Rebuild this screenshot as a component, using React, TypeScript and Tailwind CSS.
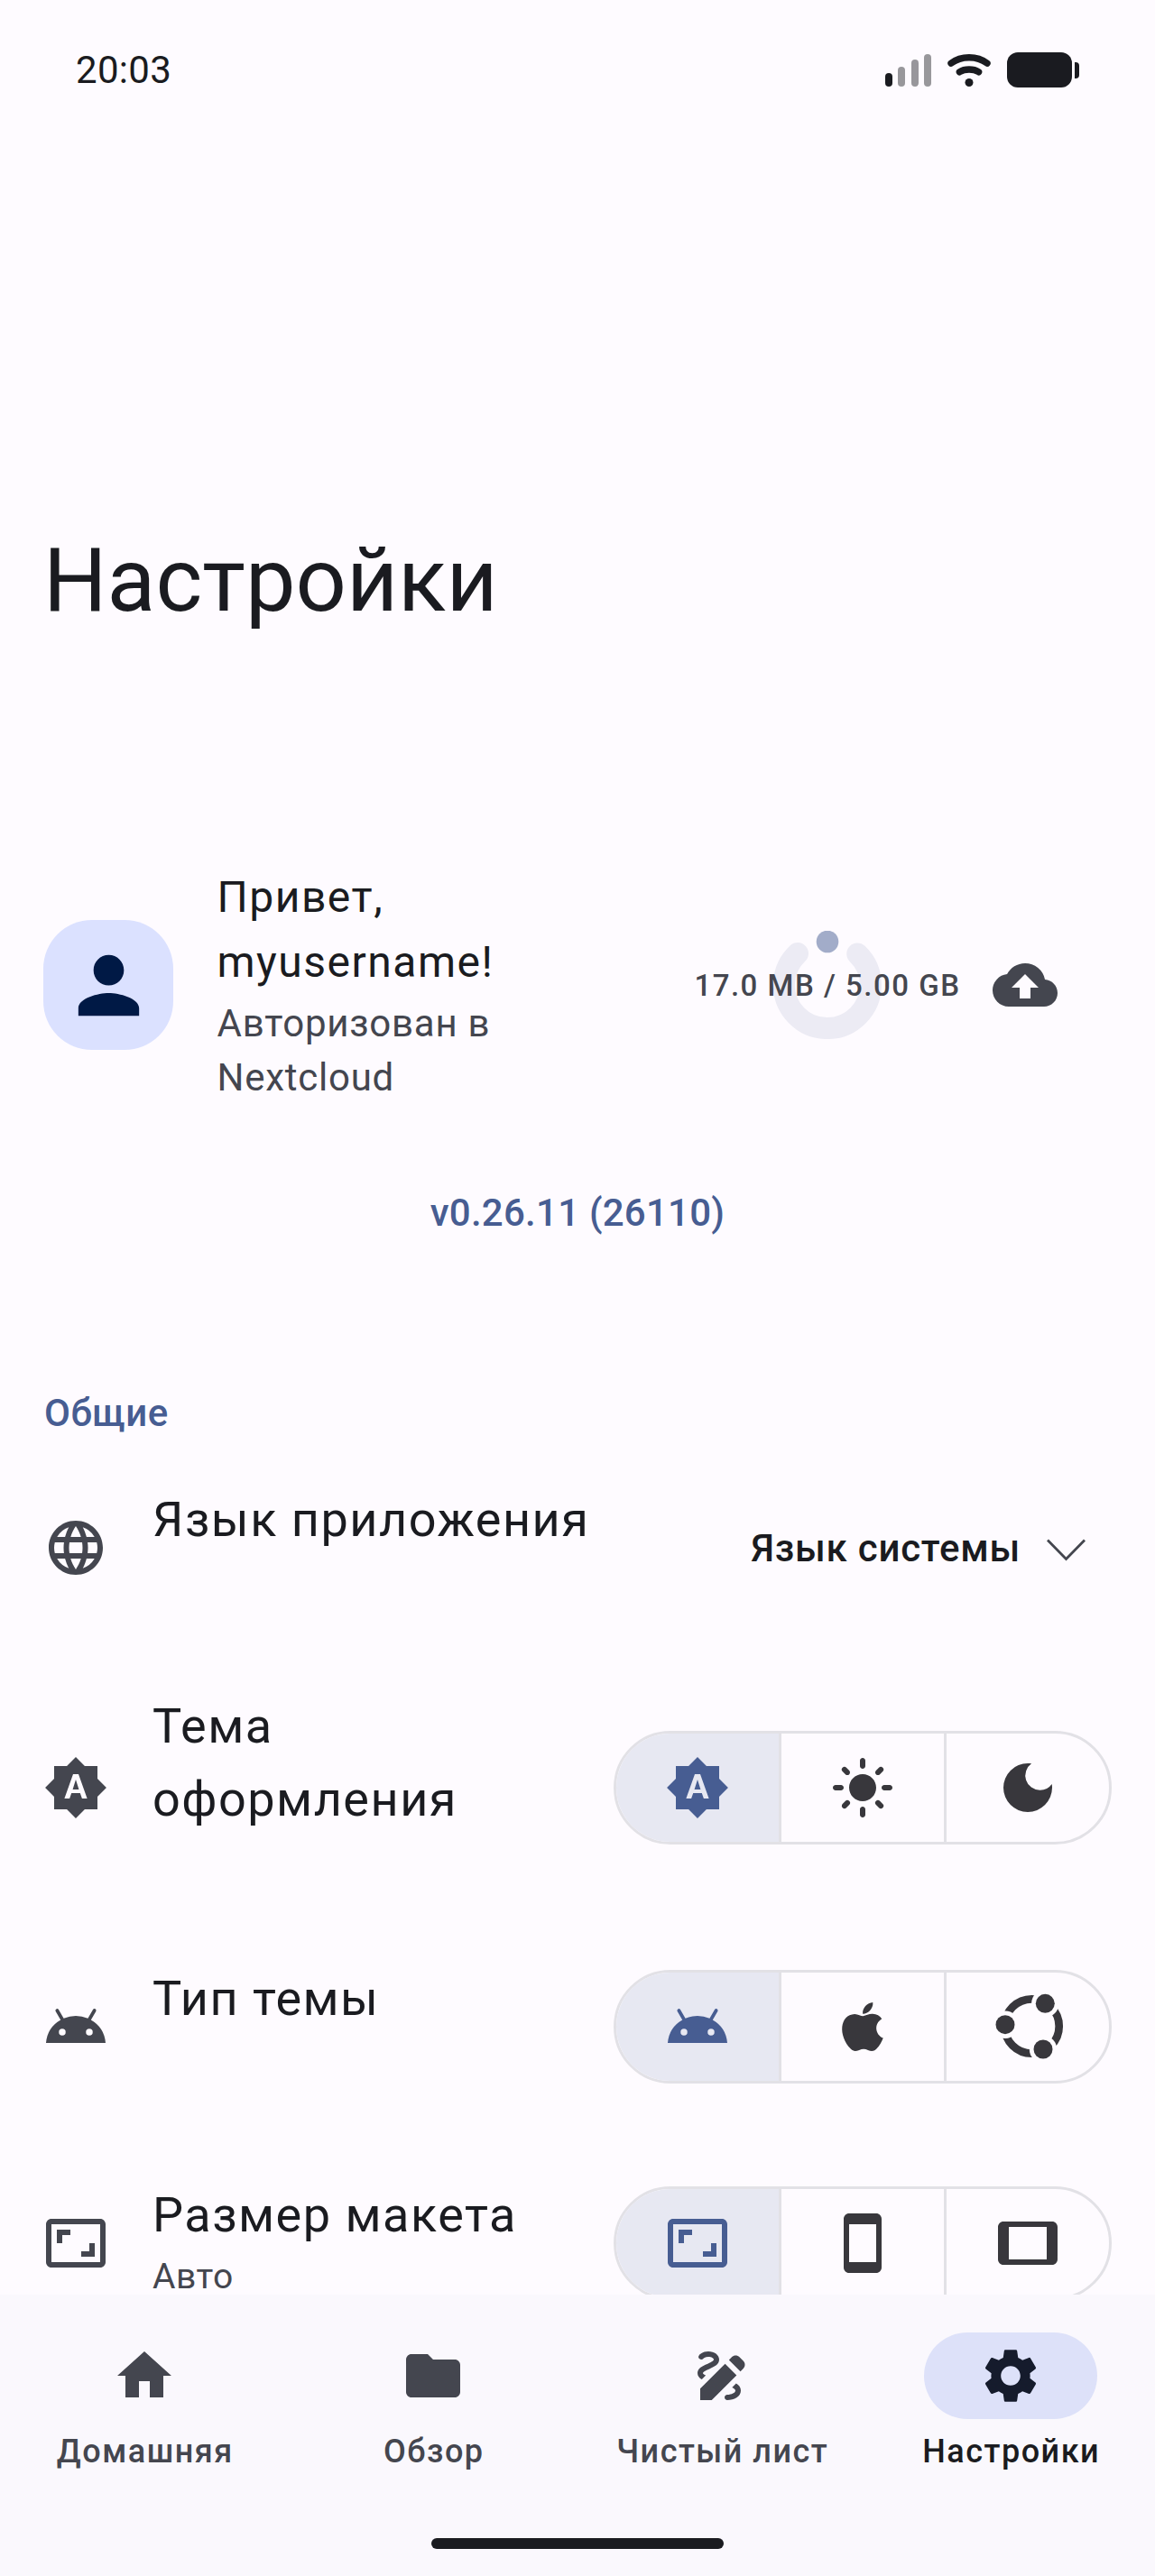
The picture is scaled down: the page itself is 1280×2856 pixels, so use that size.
import type { ComponentType, ReactNode } from "react";
import {
  MdAndroid,
  MdAspectRatio,
  MdBrightnessAuto,
  MdCloudUpload,
  MdDarkMode,
  MdDraw,
  MdFolder,
  MdHome,
  MdLanguage,
  MdLightMode,
  MdPerson,
  MdSettings,
  MdSmartphone,
  MdTablet,
} from "react-icons/md";

type Icon = ComponentType<{ className?: string }>;

function AppleIcon({ className }: { className?: string }) {
  return (
    <svg className={className} viewBox="0 0 24 24" fill="currentColor">
      <path d="M17.05 20.28c-.98.95-2.05.8-3.08.35-1.09-.46-2.09-.48-3.24 0-1.44.62-2.2.44-3.06-.35C2.79 15.25 3.51 7.59 9.05 7.31c1.35.07 2.29.74 3.08.8 1.18-.24 2.31-.93 3.57-.84 1.51.12 2.65.72 3.4 1.8-3.12 1.87-2.38 5.98.48 7.13-.57 1.5-1.31 2.99-2.54 4.09zM12.03 7.25c-.15-2.23 1.66-4.07 3.74-4.25.29 2.58-2.34 4.5-3.74 4.25z" />
    </svg>
  );
}

function UbuntuIcon({ className }: { className?: string }) {
  return (
    <svg className={`overflow-visible ${className}`} viewBox="4 4 72 72" fill="currentColor">
      <mask id="ubuntu-gaps" maskUnits="userSpaceOnUse" x="0" y="0" width="84" height="84">
        <rect width="84" height="84" fill="#fff" />
        <circle cx="59.3" cy="14.3" r="15.2" fill="#000" />
        <circle cx="15" cy="37.7" r="15.2" fill="#000" />
        <circle cx="57" cy="65" r="15.2" fill="#000" />
      </mask>
      <circle cx="44.5" cy="39.5" r="30.2" fill="none" stroke="currentColor" strokeWidth="8.7" mask="url(#ubuntu-gaps)" />
      <circle cx="59.3" cy="14.3" r="10.5" />
      <circle cx="15" cy="37.7" r="10.5" />
      <circle cx="57" cy="65" r="10.5" />
    </svg>
  );
}

function StatusBar() {
  return (
    <div className="flex h-[156px] shrink-0 items-center justify-between pr-[84px] pl-[84px]">
      <span className="text-[42px] leading-[60px] tracking-[0.3px]">20:03</span>
      <div className="flex items-center">
        <div className="flex h-9 items-end gap-[6.4px]">
          <span className="h-[15px] w-2 rounded-full bg-[#1a1b20]" />
          <span className="h-[22px] w-2 rounded-full bg-[#98979b]" />
          <span className="h-[30px] w-2 rounded-full bg-[#98979b]" />
          <span className="h-9 w-2 rounded-full bg-[#98979b]" />
        </div>
        <svg className="ml-[18px] h-9 w-12" viewBox="0 0 48 36" fill="none" stroke="#1a1b20" strokeWidth="7.4" strokeLinecap="round">
          <path d="M4 10.2C15 1.6 33 1.6 44 10.2" />
          <path d="M13.4 19.8C19 16 29 16 34.6 19.8" />
          <circle cx="24" cy="31.5" r="4.5" fill="#1a1b20" stroke="none" />
        </svg>
        <span className="mb-px ml-[18px] h-[39px] w-[72px] rounded-[12px] bg-[#1a1b20]" />
        <span className="ml-[3px] h-[18px] w-[5px] rounded-r-[4px] bg-[#1a1b20]" />
      </div>
    </div>
  );
}

function Profile() {
  return (
    <div className="mt-[257px] flex h-[264px] shrink-0 items-center pr-[108px] pl-12">
      <div className="flex size-36 items-center justify-center rounded-[54px] bg-[#dbe1ff]">
        <MdPerson className="size-[101px] text-[#001945]" />
      </div>
      <div className="ml-[48.5px] flex w-[330px] flex-col gap-0.5">
        <p className="text-[48px] leading-[72px] tracking-[1.5px]">Привет, myusername!</p>
        <p className="text-[42px] leading-[60px] tracking-[0.75px] text-[#44464f]">Авторизован в Nextcloud</p>
      </div>
      <div className="relative ml-auto flex items-center justify-center">
        <svg className="absolute size-[120px]" viewBox="0 0 120 120" fill="none">
          <path d="M93.2 25.5A48 48 0 1 1 27 25.1" stroke="#ecebf4" strokeWidth="24" strokeLinecap="round" />
          <circle cx="60" cy="12" r="12.3" fill="#a2acc9" />
        </svg>
        <span className="relative mt-0.5 text-[33px] leading-[48px] font-medium tracking-[1.5px] whitespace-nowrap text-[#44464f]">
          17.0 MB / 5.00 GB
        </span>
      </div>
      <MdCloudUpload className="ml-[35.5px] size-[72px] text-[#44464f]" />
    </div>
  );
}

function SettingRow({
  icon: Icon,
  title,
  subtitle,
  className,
  children,
}: {
  icon: Icon;
  title: string;
  subtitle?: string;
  className: string;
  children: ReactNode;
}) {
  return (
    <div className={`flex shrink-0 items-center pr-12 pl-12 ${className}`}>
      <Icon className="size-[72px] shrink-0 text-[#44464f]" />
      <div className="mr-10 ml-[49px] min-w-0 flex-1 self-start pt-px">
        <p className="text-[54px] leading-[81px] tracking-[1.5px]">{title}</p>
        {subtitle && (
          <p className="mt-[8px] text-[39px] leading-[40px] tracking-[0.5px] text-[#44464f]">{subtitle}</p>
        )}
      </div>
      {children}
    </div>
  );
}

function Segmented({ icons }: { icons: Icon[] }) {
  return (
    <div className="flex h-[126px] w-[552px] shrink-0 divide-x-[3px] divide-[#e2e1e6] overflow-hidden rounded-full border-[3px] border-[#e2e1e6]">
      {icons.map((Icon, i) => (
        <div
          key={i}
          className={
            i === 0
              ? "flex w-[183px] items-center justify-center bg-[#e7e8f2] text-[#475d92]"
              : i === 1
                ? "flex w-[183px] items-center justify-center text-[#38373c]"
                : "flex w-[180px] items-center justify-center text-[#38373c]"
          }
        >
          <Icon className="size-[72px]" />
        </div>
      ))}
    </div>
  );
}

const tabs: { label: string; icon: Icon; active?: boolean }[] = [
  { label: "Домашняя", icon: MdHome },
  { label: "Обзор", icon: MdFolder },
  { label: "Чистый лист", icon: MdDraw },
  { label: "Настройки", icon: MdSettings, active: true },
];

function BottomNav() {
  return (
    <nav className="flex h-[312px] shrink-0 flex-col items-center bg-[#faf8fd] pt-[42px]">
      <div className="grid w-full grid-cols-4">
        {tabs.map(({ label, icon: Icon, active }) => (
          <div key={label} className="flex flex-col items-center gap-3">
            <div
              className={
                active
                  ? "flex h-24 w-48 items-center justify-center rounded-full bg-[#dde1f9] text-[#151b2c]"
                  : "flex h-24 w-48 items-center justify-center text-[#44464f]"
              }
            >
              <Icon className="size-[72px]" />
            </div>
            <span
              className={
                active
                  ? "pl-[1.5px] text-[36px] leading-[48px] font-medium tracking-[1.5px] text-[#1a1b20]"
                  : "pl-[1.5px] text-[36px] leading-[48px] font-medium tracking-[1.5px] text-[#44464f]"
              }
            >
              {label}
            </span>
          </div>
        ))}
      </div>
      <div className="mt-[72px] h-3 w-[324px] rounded-full bg-[#1a1b20]" />
    </nav>
  );
}

export default function App() {
  return (
    <div className="flex h-[2856px] w-[1280px] flex-col overflow-hidden bg-[#fefbff] font-['Roboto',sans-serif] text-[#1a1b20]">
      <main className="flex h-[2544px] shrink-0 flex-col overflow-hidden">
        <StatusBar />
        <h1 className="mt-[427px] pl-12 text-[99px] leading-[120px]">Настройки</h1>
        <Profile />
        <p className="mt-[91px] text-center text-[42px] leading-[60px] font-medium tracking-[0.25px] text-[#475d92]">
          v0.26.11 (26110)
        </p>
        <h2 className="mt-[162px] pl-[49px] text-[42px] leading-[60px] font-medium tracking-[0.5px] text-[#475d92]">
          Общие
        </h2>
        <SettingRow icon={MdLanguage} title="Язык приложения" className="mt-[46px] h-[146px]">
          <button className="flex shrink-0 items-center pr-[29px]">
            <span className="mt-0.5 text-[42px] leading-[60px] font-medium tracking-[0.75px] whitespace-nowrap">
              Язык системы
            </span>
            <svg className="mt-[5px] ml-[29px] h-[25px] w-[43px]" viewBox="0 0 43 25" fill="none" stroke="#44464f" strokeWidth="2.8">
              <path d="M1 1.5L21.5 22.5L42 1.5" />
            </svg>
          </button>
        </SettingRow>
        <SettingRow icon={MdBrightnessAuto} title="Тема оформления" className="mt-[83px] h-[219px]">
          <Segmented icons={[MdBrightnessAuto, MdLightMode, MdDarkMode]} />
        </SettingRow>
        <SettingRow icon={MdAndroid} title="Тип темы" className="mt-[83px] h-[146px]">
          <Segmented icons={[MdAndroid, AppleIcon, UbuntuIcon]} />
        </SettingRow>
        <SettingRow icon={MdAspectRatio} title="Размер макета" subtitle="Авто" className="mt-[94px] h-[146px]">
          <Segmented icons={[MdAspectRatio, MdSmartphone, MdTablet]} />
        </SettingRow>
      </main>
      <BottomNav />
    </div>
  );
}
